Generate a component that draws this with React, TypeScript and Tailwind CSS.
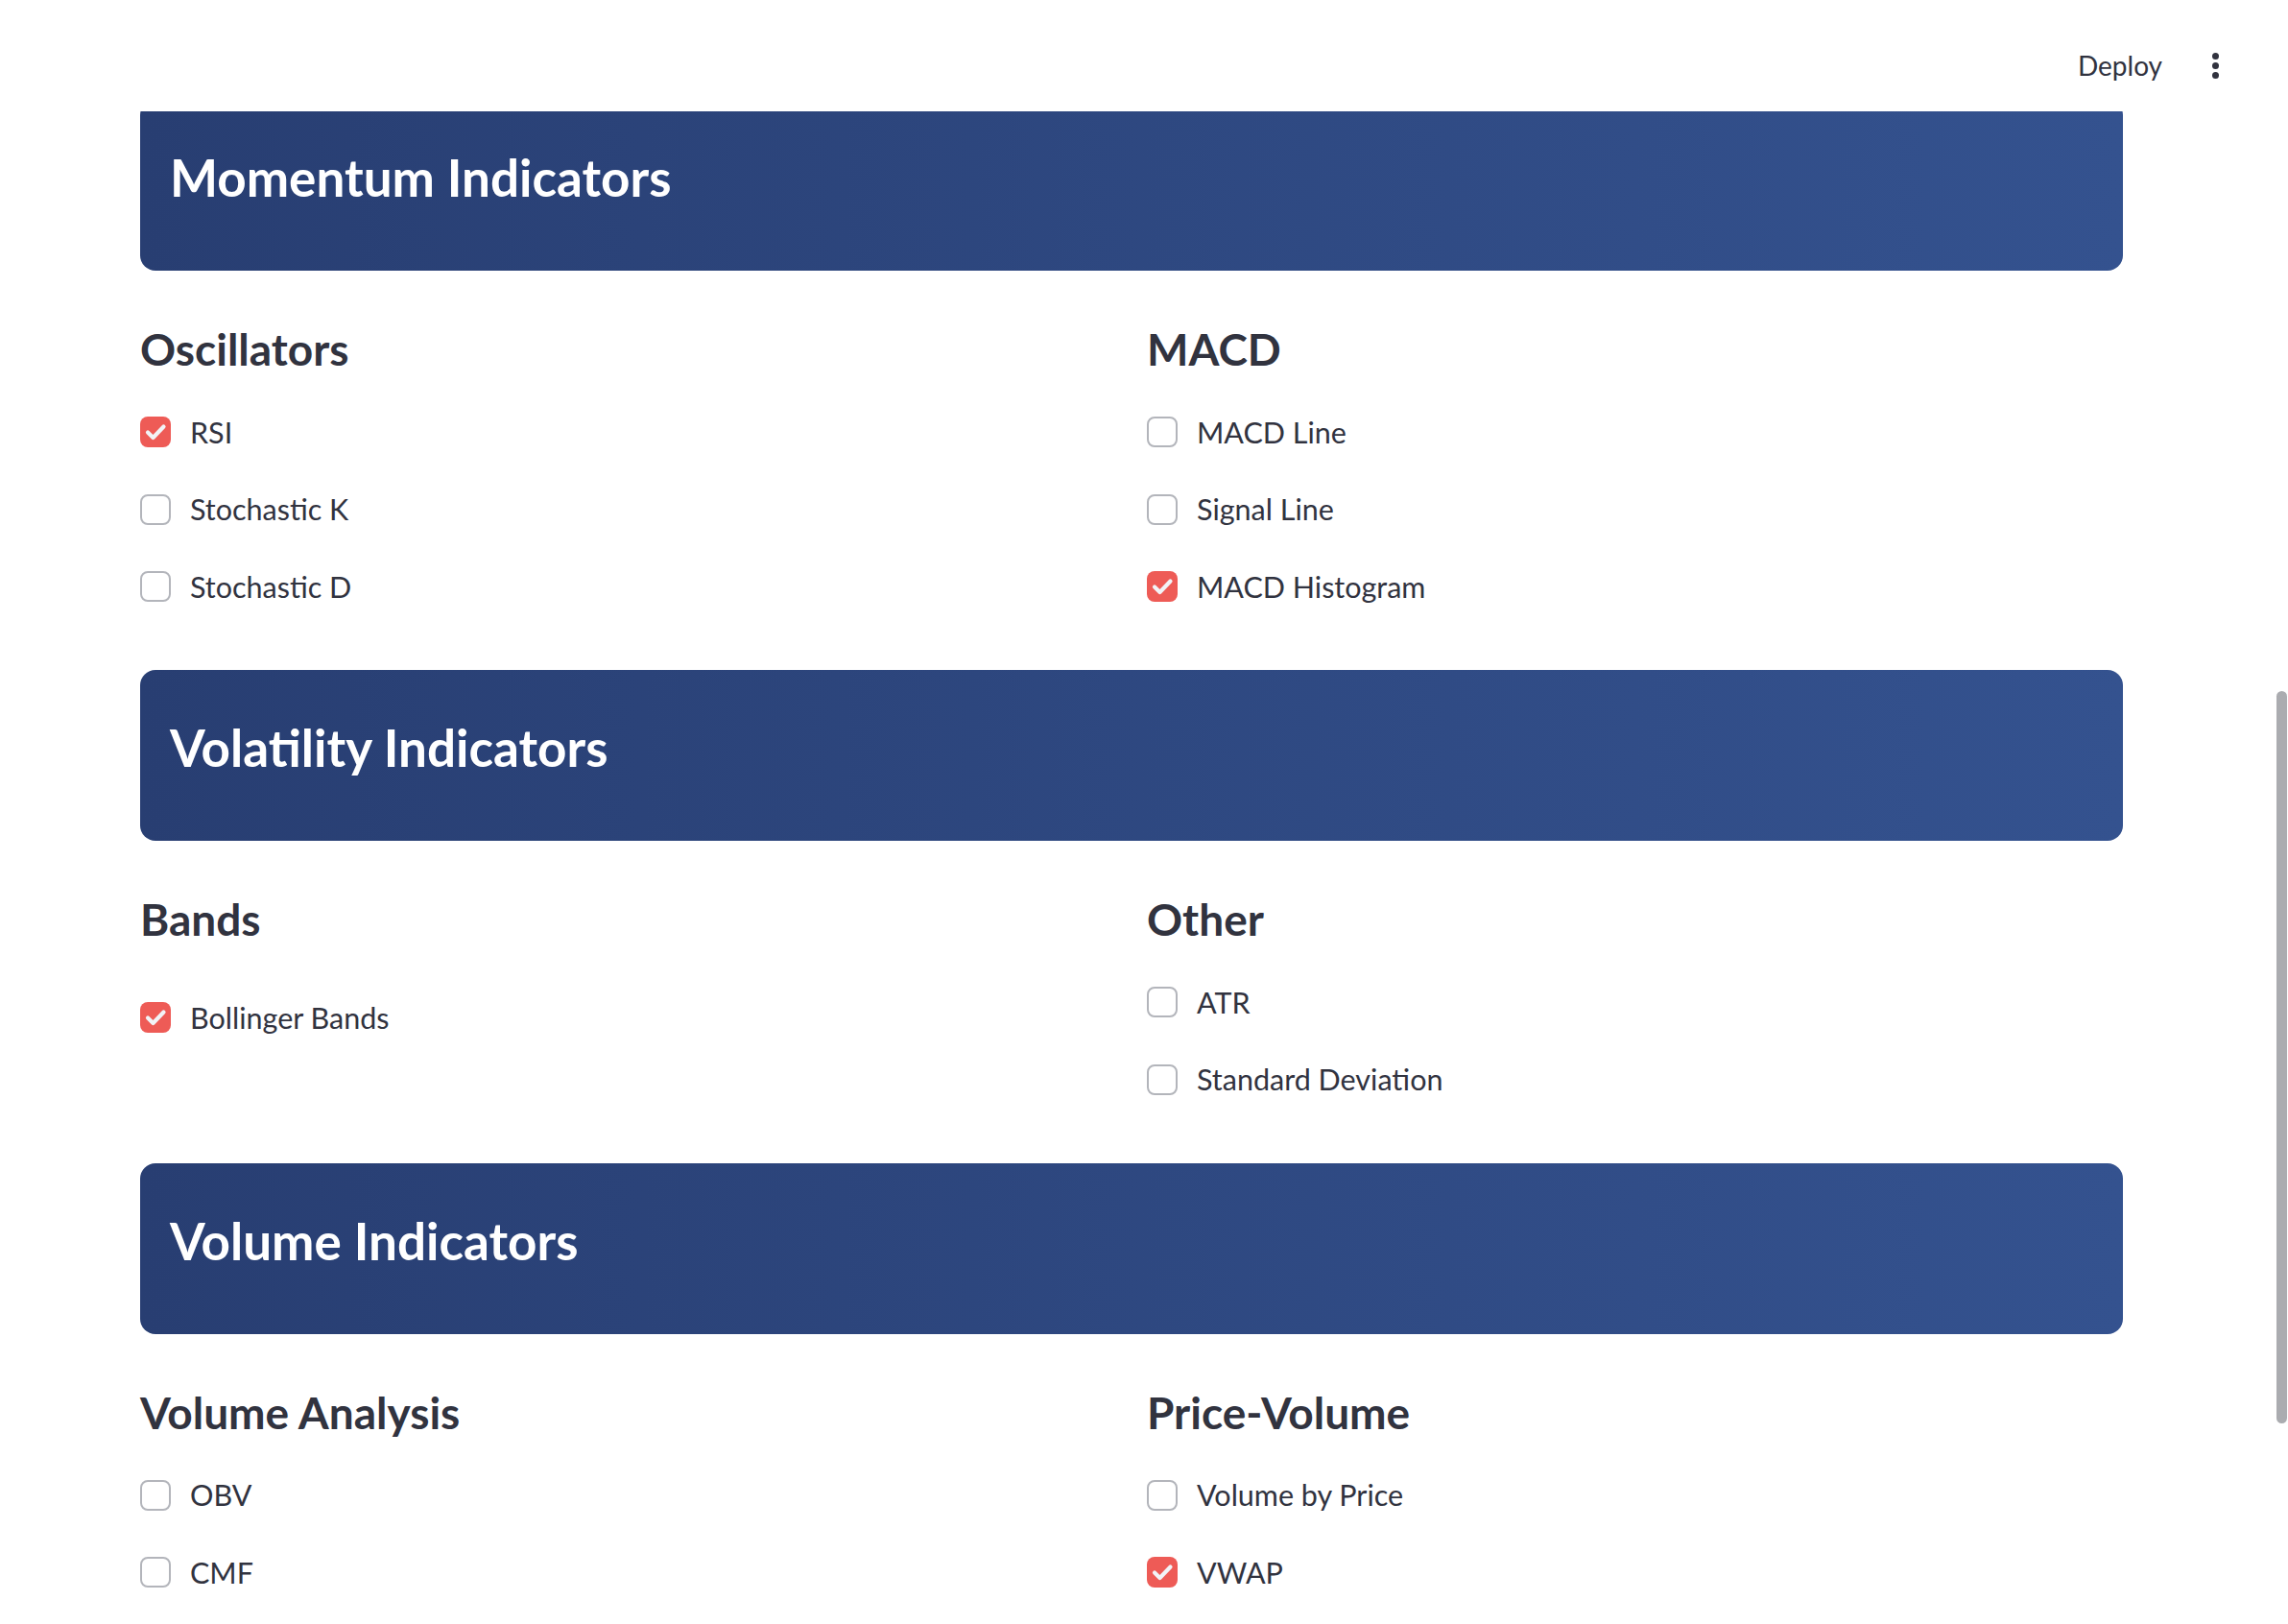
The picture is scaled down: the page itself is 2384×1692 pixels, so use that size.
import React from "react";

type Item = { label: string; checked?: boolean };
type Group = { title: string; items: Item[]; offset?: boolean };
type Section = { title: string; groups: [Group, Group] };

const sections: Section[] = [
  {
    title: "Momentum Indicators",
    groups: [
      {
        title: "Oscillators",
        items: [{ label: "RSI", checked: true }, { label: "Stochastic K" }, { label: "Stochastic D" }],
      },
      {
        title: "MACD",
        items: [{ label: "MACD Line" }, { label: "Signal Line" }, { label: "MACD Histogram", checked: true }],
      },
    ],
  },
  {
    title: "Volatility Indicators",
    groups: [
      { title: "Bands", items: [{ label: "Bollinger Bands", checked: true }], offset: true },
      { title: "Other", items: [{ label: "ATR" }, { label: "Standard Deviation" }] },
    ],
  },
  {
    title: "Volume Indicators",
    groups: [
      { title: "Volume Analysis", items: [{ label: "OBV" }, { label: "CMF" }] },
      { title: "Price-Volume", items: [{ label: "Volume by Price" }, { label: "VWAP", checked: true }] },
    ],
  },
];

function Checkbox({ checked }: { checked?: boolean }) {
  if (checked) {
    return (
      <span className="flex h-[32px] w-[32px] shrink-0 items-center justify-center rounded-[8px] bg-[#ee5b56]">
        <svg width="32" height="32" viewBox="0 0 32 32" fill="none">
          <polyline
            points="8,16.5 13.5,22 24.5,10.5"
            stroke="#f2f3f6"
            strokeWidth="4.2"
            strokeLinecap="round"
            strokeLinejoin="round"
          />
        </svg>
      </span>
    );
  }
  return <span className="h-[32px] w-[32px] shrink-0 rounded-[8px] border-2 border-[#b3b5bb] bg-white" />;
}

function GroupBlock({ group }: { group: Group }) {
  return (
    <div className="flex flex-col">
      <h4 className="h-[46px] text-[46px] font-bold leading-none text-[#31333f]">{group.title}</h4>
      <div className={group.offset ? "mt-[38.75px] flex flex-col" : "mt-[22.75px] flex flex-col"}>
        {group.items.map((it) => (
          <div key={it.label} className="flex h-[80.5px] items-center gap-[20px]">
            <Checkbox checked={it.checked} />
            <span className="text-[30.5px] leading-none text-[#31333f]">{it.label}</span>
          </div>
        ))}
      </div>
    </div>
  );
}

function SectionBlock({ section }: { section: Section }) {
  return (
    <section className="mb-[46.75px] flex flex-col">
      <div className="h-[178px] rounded-[16px] bg-gradient-to-r from-[#283e72] to-[#34528f] pl-[31px] pt-[54px]">
        <h3 className="text-[53px] font-bold leading-none text-white">{section.title}</h3>
      </div>
      <div className="mt-[59px] grid grid-cols-2 gap-[32px]">
        <GroupBlock group={section.groups[0]} />
        <GroupBlock group={section.groups[1]} />
      </div>
    </section>
  );
}

export default function App() {
  return (
    <div className="relative h-[1692px] w-full overflow-hidden bg-white font-['Lato',sans-serif]">
      <header className="absolute inset-x-0 top-0 z-10 flex h-[116px] items-start justify-end bg-white pr-[72px]">
        <div className="mt-[54px] flex items-center gap-[52px]">
          <span className="text-[28px] leading-none text-[#31333f]">Deploy</span>
          <span className="flex flex-col items-center gap-[3px]">
            <span className="h-[7px] w-[7px] rounded-full bg-[#31333f]" />
            <span className="h-[7px] w-[7px] rounded-full bg-[#31333f]" />
            <span className="h-[7px] w-[7px] rounded-full bg-[#31333f]" />
          </span>
        </div>
      </header>

      <main className="w-[2212px] pl-[146px] pt-[104px]">
        {sections.map((s) => (
          <SectionBlock key={s.title} section={s} />
        ))}
      </main>

      <div className="absolute right-[1px] top-[720px] h-[763px] w-[11px] rounded-full bg-[#abacb0]" />
    </div>
  );
}
